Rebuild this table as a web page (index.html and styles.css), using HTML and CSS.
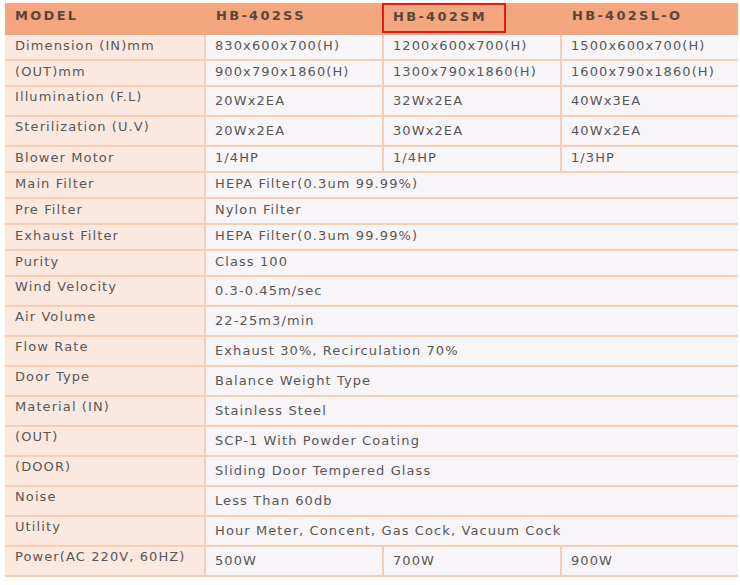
FILE: index.html
```html
<!DOCTYPE html>
<html>
<head>
<meta charset="utf-8">
<link rel="stylesheet" href="styles.css">
</head>
<body>
<table class="spec">
  <colgroup>
    <col class="c-label"><col class="c-val"><col class="c-val"><col class="c-last">
  </colgroup>
  <tr class="head">
    <th>MODEL</th>
    <th>HB-402SS</th>
    <th class="marked"><span class="mark">HB-402SM</span></th>
    <th>HB-402SL-O</th>
  </tr>
  <tr class="short"><td class="lbl">Dimension (IN)mm</td><td>830x600x700(H)</td><td>1200x600x700(H)</td><td>1500x600x700(H)</td></tr>
  <tr class="short"><td class="lbl">(OUT)mm</td><td>900x790x1860(H)</td><td>1300x790x1860(H)</td><td>1600x790x1860(H)</td></tr>
  <tr class="tall"><td class="lbl">Illumination (F.L)</td><td>20Wx2EA</td><td>32Wx2EA</td><td>40Wx3EA</td></tr>
  <tr class="tall"><td class="lbl">Sterilization (U.V)</td><td>20Wx2EA</td><td>30Wx2EA</td><td>40Wx2EA</td></tr>
  <tr class="short"><td class="lbl">Blower Motor</td><td>1/4HP</td><td>1/4HP</td><td>1/3HP</td></tr>
  <tr class="short"><td class="lbl">Main Filter</td><td colspan="3">HEPA Filter(0.3um 99.99%)</td></tr>
  <tr class="short"><td class="lbl">Pre Filter</td><td colspan="3">Nylon Filter</td></tr>
  <tr class="short"><td class="lbl">Exhaust Filter</td><td colspan="3">HEPA Filter(0.3um 99.99%)</td></tr>
  <tr class="short"><td class="lbl">Purity</td><td colspan="3">Class 100</td></tr>
  <tr class="tall"><td class="lbl">Wind Velocity</td><td colspan="3">0.3-0.45m/sec</td></tr>
  <tr class="tall"><td class="lbl">Air Volume</td><td colspan="3">22-25m3/min</td></tr>
  <tr class="tall"><td class="lbl">Flow Rate</td><td colspan="3">Exhaust 30%, Recirculation 70%</td></tr>
  <tr class="tall"><td class="lbl">Door Type</td><td colspan="3">Balance Weight Type</td></tr>
  <tr class="tall"><td class="lbl">Material (IN)</td><td colspan="3">Stainless Steel</td></tr>
  <tr class="tall"><td class="lbl">(OUT)</td><td colspan="3">SCP-1 With Powder Coating</td></tr>
  <tr class="tall"><td class="lbl">(DOOR)</td><td colspan="3">Sliding Door Tempered Glass</td></tr>
  <tr class="tall"><td class="lbl">Noise</td><td colspan="3">Less Than 60db</td></tr>
  <tr class="tall"><td class="lbl">Utility</td><td colspan="3">Hour Meter, Concent, Gas Cock, Vacuum Cock</td></tr>
  <tr class="tall"><td class="lbl">Power(AC 220V, 60HZ)</td><td>500W</td><td>700W</td><td>900W</td></tr>
</table>
</body>
</html>
```
FILE: styles.css
```css
html, body {
  margin: 0;
  background: #ffffff;
}
body {
  padding: 3px 0 0 5px;
  font-family: "DejaVu Sans", "Liberation Sans", sans-serif;
}
.spec {
  width: 733px;
  table-layout: fixed;
  border-collapse: separate;
  border-spacing: 0;
  font-size: 13px;
  line-height: 16px;
  letter-spacing: 1.1px;
  color: #575757;
}
.c-label { width: 201px; }
.c-val { width: 178px; }
.c-last { width: 176px; }

.spec th, .spec td {
  box-sizing: border-box;
  text-align: left;
  vertical-align: top;
  white-space: nowrap;
  padding: 0 0 0 9px;
}
.head th {
  height: 32px;
  background: #f4a77f;
  color: #5a463d;
  font-weight: bold;
  letter-spacing: 2.3px;
  padding-top: 5px;
  padding-left: 10px;
}
.head th.marked {
  padding-left: 0;
  padding-top: 0;
}
.mark {
  display: inline-block;
  box-sizing: border-box;
  width: 124px;
  height: 30px;
  margin-left: -2px;
  padding: 4px 0 0 9px;
  border: 2px solid #e3191c;
}
.spec td {
  background: #f7f5f7;
  border-bottom: 2px solid #f7cdb4;
  border-right: 2px solid #f7cdb4;
}
.spec td:last-child {
  border-right: 0;
}
.spec td.lbl {
  background: #fbe9df;
  padding-left: 10px;
}
.short td {
  height: 26px;
  padding-top: 3px;
}
.tall td {
  height: 30px;
  padding-top: 6px;
}
.tall td.lbl {
  padding-top: 2px;
}
```
